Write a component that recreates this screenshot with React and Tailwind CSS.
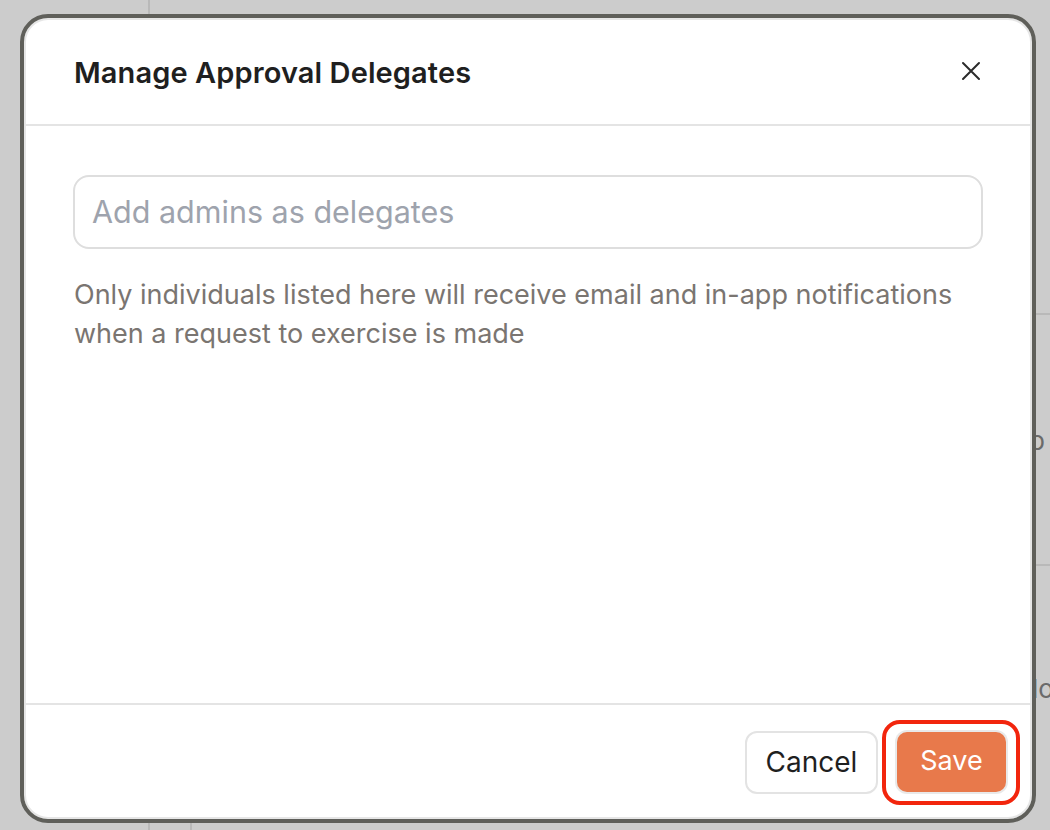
import React from 'react';

const font = { fontFamily: 'Inter, "Noto Sans", "Liberation Sans", sans-serif' };

const CloseIcon = () => (
    <svg width="20" height="20" viewBox="0 0 20 20" fill="none" stroke="#2b2b2b" strokeWidth="2" strokeLinecap="round">
        <path d="M2 2 L18 18 M18 2 L2 18" />
    </svg>
);

const App = () => {
    return (
        <div className="relative w-[1050px] h-[830px] overflow-hidden bg-[#cccccc]" style={font}>
            {/* page behind the overlay */}
            <div className="absolute left-[148px] top-0 w-[2px] h-[830px] bg-[#b9b9b9]" />
            <div className="absolute left-[190px] top-[800px] w-[2px] h-[30px] bg-[#b9b9b9]" />
            <div className="absolute left-[1030px] top-[313px] w-[20px] h-[2px] bg-[#b9b9b9]" />
            <div className="absolute left-[1030px] top-[564px] w-[20px] h-[2px] bg-[#b9b9b9]" />
            <span className="absolute left-[1029px] top-[425px] text-[26px] leading-[32px] text-[#6a6a6a]">b</span>
            <span className="absolute left-[1032px] top-[673px] text-[26px] leading-[32px] text-[#6a6a6a]">lo</span>

            {/* Dialog */}
            <div className="relative ml-[20px] mt-[14px] w-[1016px] h-[809px] flex flex-col bg-white border-4 border-[#5f5f5a] rounded-[28px] shadow-[inset_0_0_0_2px_#e6e6e6] overflow-hidden">
                {/* Header */}
                <div className="h-[108px] shrink-0 flex items-center justify-between pl-[50px] pr-[51px] border-b-2 border-[#e4e4e4]">
                    <h2 className="mt-[3px] text-[29px] font-semibold text-[#1f1f1f] tracking-[0.1px]">
                        Manage Approval Delegates
                    </h2>
                    <CloseIcon />
                </div>

                {/* Body */}
                <div className="flex-1 px-[49px] pt-[49px]">
                    <div className="h-[74px] flex items-center px-[17px] border-2 border-[#dedede] rounded-[16px]">
                        <span className="text-[30.5px] text-[#9ea3ad]">Add admins as delegates</span>
                    </div>
                    <p className="mt-[26px] pl-px text-[27px] leading-[39px] text-[#7a7571]">
                        Only individuals listed here will receive email and in-app notifications
                        <br />
                        when a request to exercise is made
                    </p>
                </div>

                {/* Footer */}
                <div className="h-[116px] shrink-0 flex items-center justify-end gap-[4px] pr-[12px] border-t-2 border-[#e4e4e4]">
                    <button className="w-[133px] h-[63px] rounded-[12px] border-2 border-[#e3e3e3] bg-white text-[28px] text-[#1f1f1f]">
                        Cancel
                    </button>
                    <div className="border-4 border-[#f2250d] rounded-[18px] pl-[11px] pr-[10px] pt-[8px] pb-[9px]">
                        <button className="w-[109px] h-[60px] rounded-[10px] bg-[#e8794b] shadow-[0_0_0_2px_#e9e9e9] text-[27px] text-white">
                            Save
                        </button>
                    </div>
                </div>
            </div>
        </div>
    );
};

export default App;
